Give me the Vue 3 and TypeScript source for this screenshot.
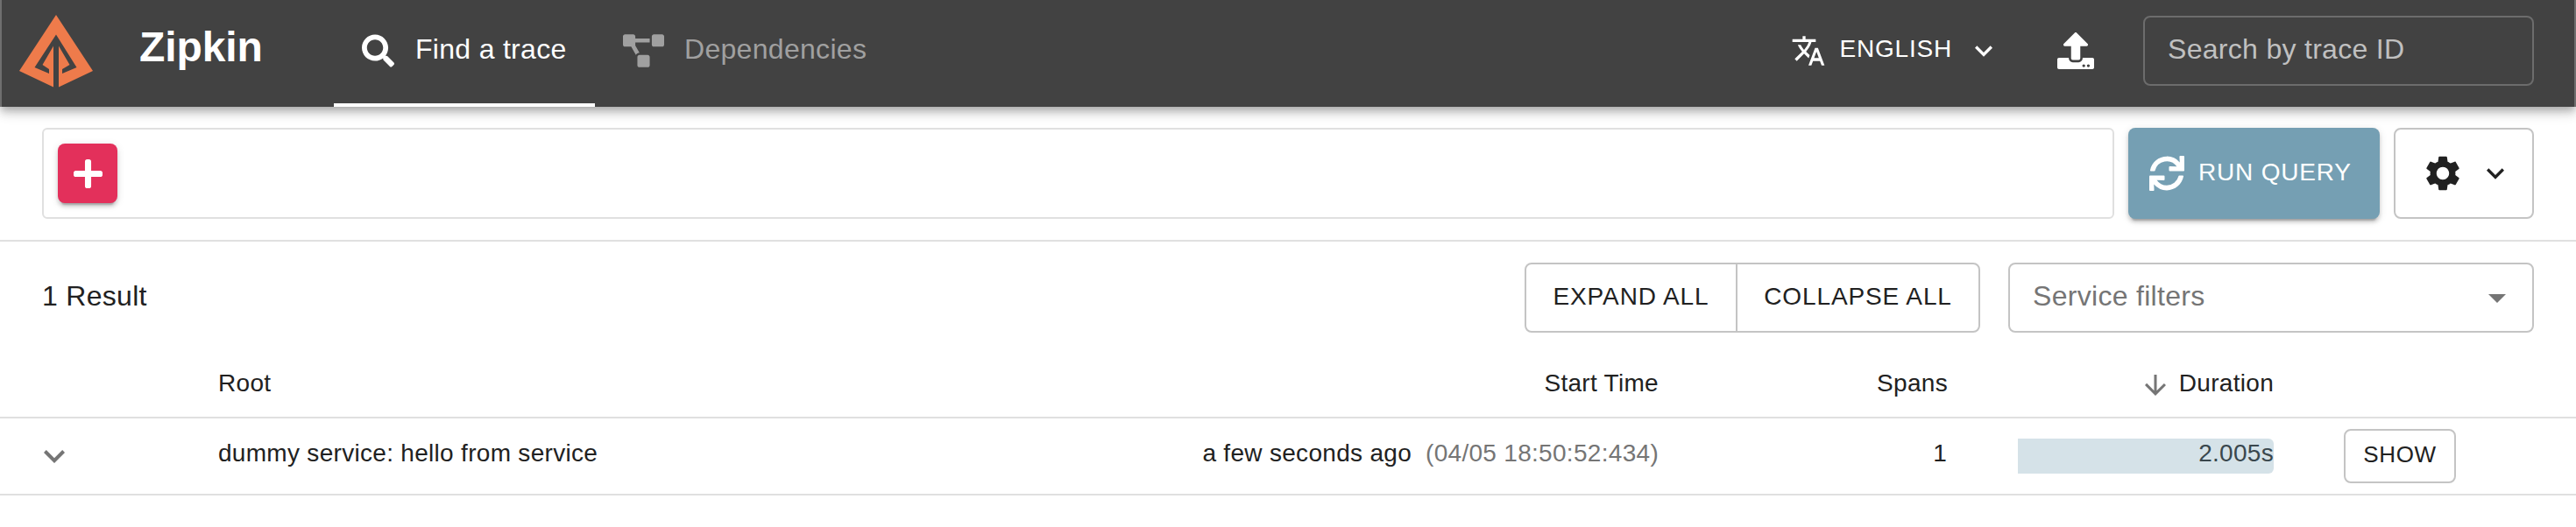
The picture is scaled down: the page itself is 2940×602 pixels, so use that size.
<script setup lang="ts">
interface Trace {
  root: string
  ago: string
  time: string
  spans: number
  duration: string
  percent: number
}

const traces: Trace[] = [
  {
    root: 'dummy service: hello from service',
    ago: 'a few seconds ago',
    time: '(04/05 18:50:52:434)',
    spans: 1,
    duration: '2.005s',
    percent: 100,
  },
]
</script>

<template>
  <div class="page">
    <header class="appbar">
      <svg class="logo" viewBox="0 0 84 83">
        <path d="M42 0 84 64 45 82.5V35.5L57.5 57 49 62V67L65.500 60 42 22.500 17.500 60 34 67V62L26.500 57 39 35.500V82.500L0 64Z" fill="#ee7b4b" />
      </svg>
      <h1 class="title">Zipkin</h1>
      <nav class="tabs">
        <a class="tab active">
          <svg class="i-search" viewBox="0 0 512 512"><path fill="currentColor" d="M505 442.700L405.300 343c-4.500-4.500-10.600-7-17-7H372c27.600-35.300 44-79.700 44-128C416 93.100 322.900 0 208 0S0 93.100 0 208s93.100 208 208 208c48.300 0 92.700-16.400 128-44v16.300c0 6.400 2.500 12.500 7 17l99.700 99.700c9.400 9.400 24.600 9.400 33.900 0l28.300-28.300c9.400-9.400 9.400-24.600.1-34zM208 336c-70.700 0-128-57.200-128-128 0-70.700 57.200-128 128-128 70.700 0 128 57.200 128 128 0 70.700-57.200 128-128 128z" /></svg>
          <span>Find a trace</span>
        </a>
        <a class="tab">
          <svg class="i-deps" viewBox="0 0 640 512"><path fill="currentColor" d="M384 320H256c-17.670 0-32 14.330-32 32v128c0 17.670 14.330 32 32 32h128c17.670 0 32-14.330 32-32V352c0-17.670-14.330-32-32-32zM192 32c0-17.670-14.330-32-32-32H32C14.330 0 0 14.330 0 32v128c0 17.670 14.330 32 32 32h95.720l73.160 128.040C211.980 300.980 232.400 288 256 288h.28L192 175.510V128h224V64H192V32zM608 0H480c-17.670 0-32 14.330-32 32v128c0 17.670 14.330 32 32 32h128c17.670 0 32-14.330 32-32V32c0-17.670-14.330-32-32-32z" /></svg>
          <span>Dependencies</span>
        </a>
      </nav>
      <div class="language">
        <svg class="i-translate" viewBox="0 0 24 24"><path fill="currentColor" d="M12.870 15.070l-2.540-2.510.03-.03c1.740-1.940 2.980-4.170 3.710-6.530H17V4h-7V2H8v2H1v1.990h11.170C11.500 7.920 10.440 9.750 9 11.350 8.070 10.320 7.300 9.190 6.690 8h-2c.73 1.630 1.730 3.170 2.980 4.560l-5.090 5.020L4 19l5-5 3.110 3.110.76-2.040zM18.500 10h-2L12 22h2l1.120-3h4.750L21 22h2l-4.500-12zm-2.620 7l1.620-4.330L19.120 17h-3.240z" /></svg>
        <span class="lang-text">ENGLISH</span>
        <svg class="i-chev" viewBox="0 0 24 24"><path fill="currentColor" d="M16.590 8.590 12 13.170 7.410 8.590 6 10l6 6 6-6z" /></svg>
      </div>
      <svg class="i-upload" viewBox="0 0 512 512"><path fill="currentColor" d="M296 384h-80c-13.300 0-24-10.700-24-24V192h-87.700c-17.800 0-26.700-21.500-14.100-34.100L242.300 5.700c7.500-7.500 19.800-7.500 27.300 0l152.200 152.200c12.600 12.600 3.700 34.100-14.100 34.100H320v168c0 13.300-10.700 24-24 24zm216-8v112c0 13.300-10.700 24-24 24H24c-13.300 0-24-10.700-24-24V376c0-13.300 10.700-24 24-24h136v8c0 30.900 25.100 56 56 56h80c30.900 0 56-25.100 56-56v-8h136c13.300 0 24 10.700 24 24zm-124 88c0-11-9-20-20-20s-20 9-20 20 9 20 20 20 20-9 20-20zm64 0c0-11-9-20-20-20s-20 9-20 20 9 20 20 20 20-9 20-20z" /></svg>
      <div class="trace-id">Search by trace ID</div>
    </header>

    <section class="query">
      <div class="criteria">
        <button class="add">
          <svg class="i-plus" viewBox="0 0 448 448"><path fill="currentColor" d="M416 176H272V32c0-17.670-14.330-32-32-32h-32c-17.670 0-32 14.330-32 32v144H32c-17.670 0-32 14.330-32 32v32c0 17.670 14.330 32 32 32h144v144c0 17.670 14.330 32 32 32h32c17.670 0 32-14.330 32-32V272h144c17.670 0 32-14.330 32-32v-32c0-17.670-14.330-32-32-32z" /></svg>
        </button>
      </div>
      <button class="run">
        <svg class="i-sync" viewBox="0 0 512 512"><path fill="currentColor" d="M440.650 12.570l4 82.770A247.160 247.160 0 0 0 255.830 8C134.730 8 33.910 94.920 12.290 209.820A12 12 0 0 0 24.090 224h49.050a12 12 0 0 0 11.670-9.260 175.910 175.910 0 0 1 317-56.940l-101.460-4.860a12 12 0 0 0-12.570 12v47.410a12 12 0 0 0 12 12H500a12 12 0 0 0 12-12V12a12 12 0 0 0-12-12h-47.370a12 12 0 0 0-11.980 12.570zM255.830 432a175.610 175.610 0 0 1-146-77.800l101.800 4.870a12 12 0 0 0 12.570-12v-47.400a12 12 0 0 0-12-12H12a12 12 0 0 0-12 12V500a12 12 0 0 0 12 12h47.350a12 12 0 0 0 12-12.600l-4.150-82.570A247.170 247.170 0 0 0 255.830 504c121.110 0 221.930-86.920 243.550-201.820a12 12 0 0 0-11.800-14.180h-49.050a12 12 0 0 0-11.670 9.260A175.860 175.860 0 0 1 255.830 432z" /></svg>
        <span>RUN QUERY</span>
      </button>
      <button class="settings">
        <svg class="i-gear" viewBox="0 0 24 24"><path fill="currentColor" d="M19.140 12.940c.04-.3.06-.61.06-.94 0-.32-.02-.64-.07-.94l2.030-1.580c.18-.14.23-.41.12-.61l-1.920-3.320c-.12-.22-.37-.29-.59-.22l-2.390.96c-.5-.38-1.030-.7-1.620-.94l-.36-2.540c-.04-.24-.24-.41-.48-.41h-3.840c-.24 0-.43.17-.47.41l-.36 2.540c-.59.24-1.130.57-1.620.94l-2.390-.96c-.22-.08-.47 0-.59.22L2.740 8.870c-.12.21-.08.47.12.61l2.030 1.580c-.05.3-.09.63-.09.94s.02.64.07.94l-2.030 1.580c-.18.14-.23.41-.12.61l1.920 3.320c.12.22.37.29.59.22l2.390-.96c.5.38 1.030.7 1.620.94l.36 2.540c.05.24.24.41.48.41h3.840c.24 0 .44-.17.47-.41l.36-2.540c.59-.24 1.130-.56 1.620-.94l2.390.96c.22.08.47 0 .59-.22l1.920-3.320c.12-.22.07-.47-.12-.61l-2.010-1.580zM12 15.600c-1.980 0-3.600-1.620-3.600-3.600s1.620-3.600 3.600-3.600 3.600 1.620 3.600 3.600-1.620 3.600-3.600 3.600z" /></svg>
        <svg class="i-chev" viewBox="0 0 24 24"><path fill="currentColor" d="M16.590 8.590 12 13.170 7.410 8.590 6 10l6 6 6-6z" /></svg>
      </button>
    </section>

    <section class="toolbar">
      <div class="count">1 Result</div>
      <div class="group">
        <button class="expand">EXPAND ALL</button>
        <button class="collapse">COLLAPSE ALL</button>
      </div>
      <div class="filter">
        <span>Service filters</span>
        <svg class="i-drop" viewBox="0 0 10 5"><path fill="currentColor" d="M0 0l5 5 5-5z" /></svg>
      </div>
    </section>

    <div class="table">
      <div class="row head">
        <div></div>
        <div>Root</div>
        <div class="right">Start Time</div>
        <div class="right">Spans</div>
        <div class="right sorted">
          <svg class="i-arrow" viewBox="0 0 24 24"><path fill="currentColor" d="M20 12l-1.410-1.410L13 16.170V4h-2v12.170l-5.580-5.590L4 12l8 8 8-8z" /></svg>
          <span>Duration</span>
        </div>
        <div></div>
      </div>
      <div v-for="t in traces" :key="t.time" class="row body">
        <div class="toggle">
          <svg class="i-down" viewBox="0 0 24 14.800"><path fill="currentColor" d="M21.180 0 12 9.160 2.820 0 0 2.820l12 12 12-12z" /></svg>
        </div>
        <div>{{ t.root }}</div>
        <div class="right">{{ t.ago }}<span class="time">{{ t.time }}</span></div>
        <div class="right spans">{{ t.spans }}</div>
        <div class="duration">
          <span>{{ t.duration }}</span>
          <div class="bar" :style="{ width: t.percent + '%' }"></div>
        </div>
        <div class="action"><button class="show">SHOW</button></div>
      </div>
    </div>
  </div>
</template>

<style>
body {
  margin: 0;
  background: #fff;
}
</style>

<style scoped>
.page {
  width: 2940px;
  height: 602px;
  box-sizing: border-box;
  overflow: hidden;
  background: #fff;
  color: #212121;
  font-family: "Liberation Sans", Arial, sans-serif;
  font-size: 28px;
  letter-spacing: 0.3px;
}
.page * {
  box-sizing: border-box;
}
svg {
  display: block;
  flex: none;
}
button {
  display: flex;
  align-items: center;
  margin: 0;
  padding: 0;
  border: 0;
  background: none;
  color: inherit;
  font: inherit;
  font-size: 28px;
  letter-spacing: 0.8px;
  line-height: 48px;
  white-space: nowrap;
}
.appbar {
  position: relative;
  display: flex;
  align-items: center;
  height: 122px;
  padding: 0 46px 0 20px;
  border: solid #6f6f6f;
  border-width: 0 2px;
  background: #424242;
  color: #fff;
  box-shadow: 0 4px 8px -2px rgba(0, 0, 0, 0.2), 0 8px 10px 0 rgba(0, 0, 0, 0.14), 0 2px 20px 0 rgba(0, 0, 0, 0.12);
}
.logo {
  width: 84px;
  height: 83px;
  margin-top: -5px;
}
.title {
  width: 220px;
  margin: -15px 0 0 53px;
  font-size: 48px;
  font-weight: 700;
  line-height: 64px;
  letter-spacing: -0.1px;
}
.tabs {
  display: flex;
  align-self: stretch;
  margin-left: 2px;
}
.tab {
  display: flex;
  align-items: center;
  height: 122px;
  padding: 0 32px 6px;
  color: #a0a0a0;
  font-size: 32px;
  border-bottom: 4px solid transparent;
}
.tab span {
  line-height: 40px;
}
.active {
  width: 298px;
  color: #fff;
  border-bottom-color: #fff;
}
.i-search {
  width: 37px;
  height: 38px;
  margin-top: 4px;
}
.active span {
  margin-left: 24px;
}
.i-deps {
  width: 47px;
  height: 38px;
  margin-top: 4px;
}
.i-deps + span {
  margin-left: 23px;
}
.language {
  display: flex;
  align-items: center;
  margin-left: auto;
  margin-top: -6px;
}
.i-translate {
  width: 40px;
  height: 40px;
}
.lang-text {
  margin: -4px 0 0 15px;
  font-size: 28px;
  letter-spacing: 0.8px;
}
.i-chev {
  width: 40px;
  height: 40px;
}
.language .i-chev {
  margin-left: 16px;
}
.i-upload {
  width: 42px;
  height: 42px;
  margin: -6px 0 0 64px;
}
.trace-id {
  width: 446px;
  height: 80px;
  margin: -6px 0 0 56px;
  padding-left: 26px;
  border: 2px solid #6c6c6c;
  border-radius: 8px;
  color: #c0c0c0;
  font-size: 32px;
  line-height: 72px;
}
.query {
  display: flex;
  height: 154px;
  padding: 24px 48px 0;
  border-bottom: 2px solid #e0e0e0;
}
.criteria {
  width: 2365px;
  height: 104px;
  padding: 16px;
  border: 2px solid #e0e0e0;
  border-radius: 6px;
}
.add {
  justify-content: center;
  width: 68px;
  height: 68px;
  border-radius: 8px;
  background: #e3305b;
  color: #fff;
  box-shadow: 0 6px 2px -4px rgba(0, 0, 0, 0.2), 0 4px 4px 0 rgba(0, 0, 0, 0.14), 0 2px 10px 0 rgba(0, 0, 0, 0.12);
}
.i-plus {
  width: 33px;
  height: 33px;
}
.run {
  width: 287px;
  height: 104px;
  margin-left: 16px;
  padding-left: 24px;
  border-radius: 8px;
  background: #759fb3;
  color: #fff;
  box-shadow: 0 6px 2px -4px rgba(0, 0, 0, 0.2), 0 4px 4px 0 rgba(0, 0, 0, 0.14), 0 2px 10px 0 rgba(0, 0, 0, 0.12);
}
.i-sync {
  width: 40px;
  height: 40px;
  margin-right: 16px;
}
.run span {
  margin-top: -3px;
}
.settings {
  width: 160px;
  height: 104px;
  margin-left: 16px;
  padding-left: 30px;
  border: 2px solid #c4c4c4;
  border-radius: 8px;
}
.i-gear {
  width: 48px;
  height: 48px;
}
.settings .i-chev {
  margin-left: 16px;
}
.toolbar {
  display: flex;
  align-items: center;
  height: 128px;
  padding: 0 48px;
}
.count {
  margin-top: -4px;
  font-size: 32px;
}
.group {
  display: flex;
  width: 520px;
  height: 80px;
  margin-left: auto;
  border: 2px solid #c4c4c4;
  border-radius: 8px;
}
.group button {
  justify-content: center;
  padding-bottom: 3px;
  letter-spacing: 0.9px;
}
.expand {
  width: 241px;
  border-right: 2px solid #c4c4c4;
}
.collapse {
  flex: 1;
}
.filter {
  display: flex;
  align-items: center;
  justify-content: space-between;
  width: 600px;
  height: 80px;
  margin-left: 32px;
  padding: 0 30px 0 26px;
  border: 2px solid #c4c4c4;
  border-radius: 8px;
  color: #757575;
  font-size: 32px;
}
.filter span {
  margin-top: -4px;
}
.i-drop {
  width: 20px;
  height: 10px;
  margin-top: 2px;
}
.row {
  display: grid;
  grid-template-columns: 249px 999px 645px 330px 372px 345px;
  align-items: center;
  border-bottom: 2px solid #e0e0e0;
}
.head {
  height: 74px;
  padding-bottom: 4px;
}
.body {
  height: 88px;
  line-height: 40px;
}
.row > div {
  white-space: nowrap;
}
.head > div {
  line-height: 40px;
}
.body > div {
  margin-top: -6px;
}
.right {
  text-align: right;
}
.spans {
  padding-right: 1px;
}
.sorted {
  display: flex;
  justify-content: flex-end;
}
.i-arrow {
  width: 36px;
  height: 36px;
  margin: 4px 9px 0 0;
  color: #757575;
}
.toggle {
  padding-left: 50px;
  color: #757575;
}
.i-down {
  width: 24px;
  height: 15px;
  margin-top: 7px;
}
.time {
  margin-left: 16px;
  color: #757575;
}
.body .duration {
  position: relative;
  height: 40px;
  margin: 0 0 0 80px;
  text-align: right;
}
.duration span {
  display: block;
  line-height: 34px;
}
.bar {
  position: absolute;
  top: 0;
  left: 0;
  height: 40px;
  border-radius: 0 6px 6px 0;
  background: rgba(117, 159, 179, 0.3);
}
.body .action {
  margin: 0;
  padding-left: 80px;
}
.show {
  justify-content: center;
  width: 128px;
  height: 62px;
  padding-bottom: 4px;
  border: 2px solid #c4c4c4;
  border-radius: 8px;
  font-size: 26px;
  letter-spacing: 0.7px;
}
</style>
